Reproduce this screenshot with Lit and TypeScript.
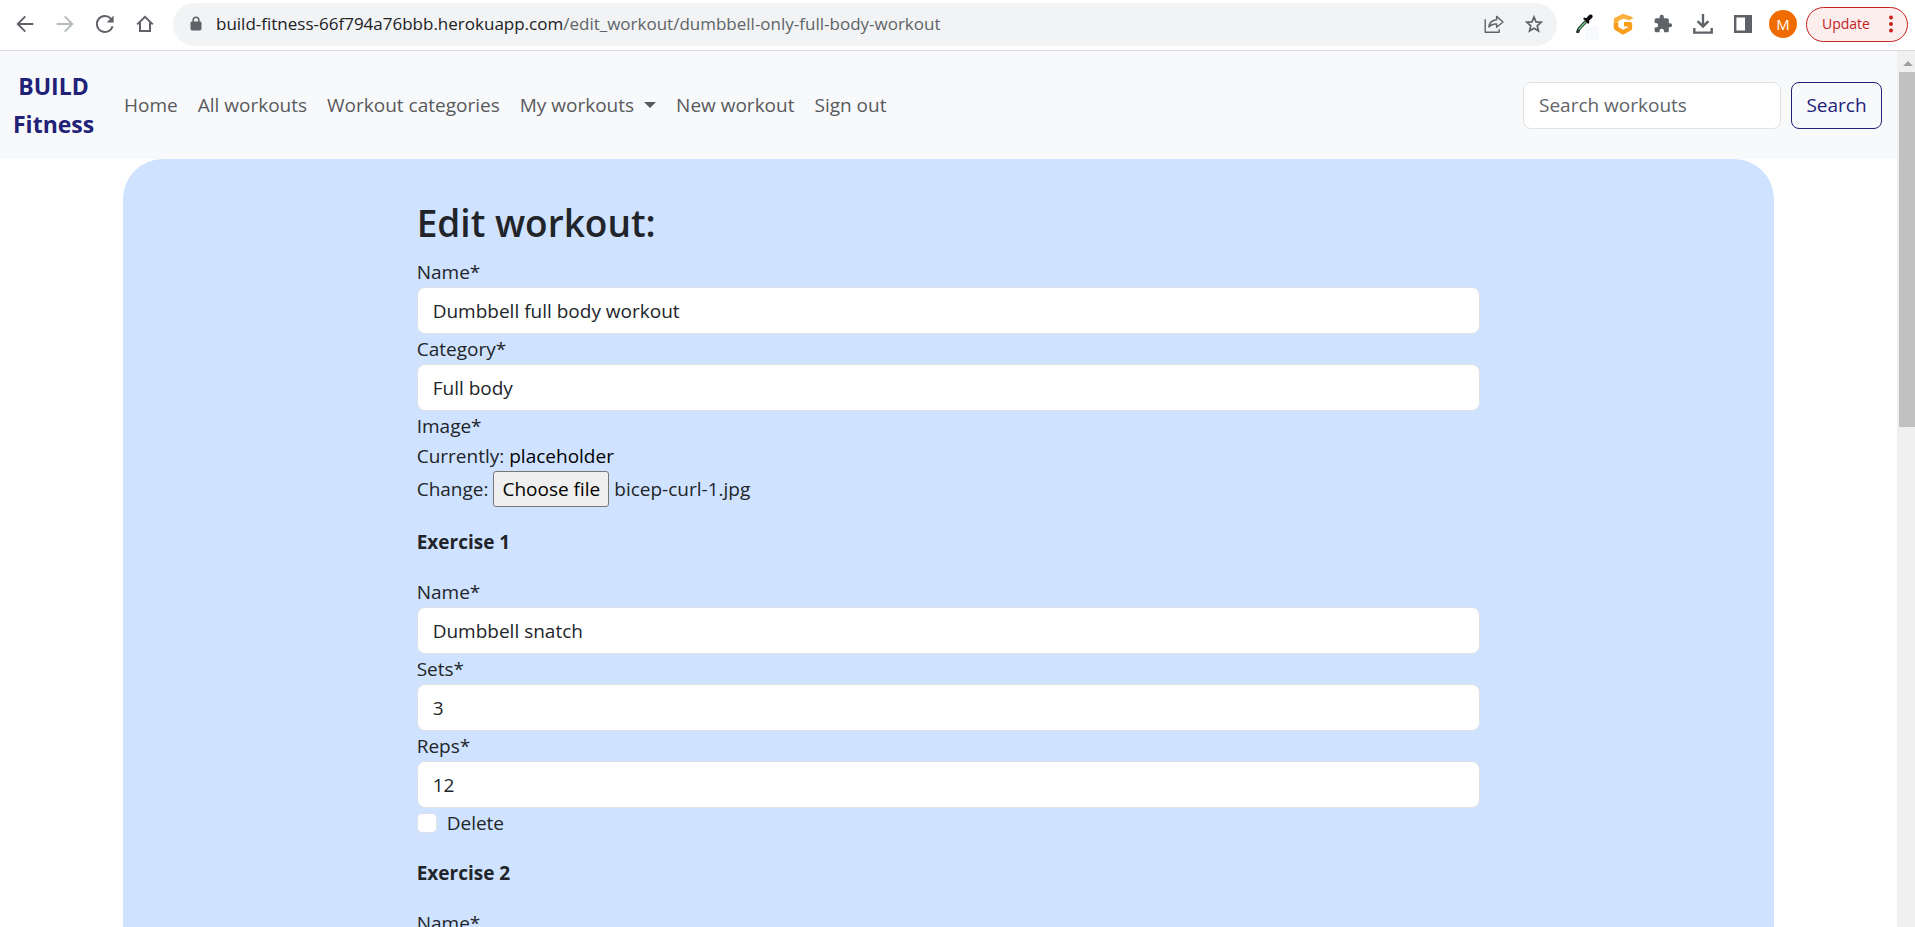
import { LitElement, html, css } from "lit";
import { customElement, property, query } from "lit/decorators.js";

const textStyles = css`
  *, *::before, *::after { box-sizing: border-box; }
  button, input, select { font: inherit; color: inherit; margin: 0; }
  svg { display: block; }
  a { color: inherit; text-decoration: none; }
`;

@customElement("browser-bar")
class BrowserBar extends LitElement {
  static styles = [textStyles, css`
    :host { display: block; flex: none; background: #fff; color: #5f6368; border-bottom: 1px solid #d9dbdf; }
    .bar { display: flex; align-items: center; height: 50px; padding: 0 7px 2px 5px; }
    .group { display: flex; }
    .icon { display: grid; place-items: center; width: 40px; height: 40px; padding: 0; border: 0; background: none; }
    .dim { color: #b9bcbf; }
    .address { display: flex; align-items: center; flex: 1; min-width: 0; height: 43px; margin: 0 6px 0 8px; padding: 0 3px 0 17px; border-radius: 22px; background: #f1f3f4; }
    .url { flex: 1; min-width: 0; margin-left: 14px; font-size: 17px; line-height: 24px; white-space: nowrap; overflow: hidden; text-overflow: ellipsis; }
    .host { color: #202124; }
    .avatar { display: grid; place-items: center; width: 28px; height: 28px; margin: 0 9px 0 6px; padding: 0; border: 0; border-radius: 50%; background: #ef6c00; color: #fff; font-size: 15px; line-height: 28px; }
    .update { display: flex; align-items: center; justify-content: space-between; width: 102px; height: 35px; padding: 0 14px 0 15px; border: 1px solid #c5221f; border-radius: 18px; background: #fbeeed; color: #c5221f; font-size: 14px; }
  `];

  render() {
    return html`
      <div class="bar">
        <div class="group">
          <button class="icon" aria-label="Back">
            <svg width="20" height="20" viewBox="0 0 20 20" fill="none" stroke="currentColor" stroke-width="1.9"><path d="M18.3 10H3M10.3 2.4 2.7 10l7.6 7.6"/></svg>
          </button>
          <button class="icon dim" aria-label="Forward">
            <svg width="20" height="20" viewBox="0 0 20 20" fill="none" stroke="currentColor" stroke-width="1.9"><path d="M1.7 10H17M9.7 2.4l7.6 7.6-7.6 7.6"/></svg>
          </button>
          <button class="icon" aria-label="Reload">
            <svg width="20" height="20" viewBox="0 0 20 20"><path d="M15.8 4.6A8 8 0 1 0 17.6 12.3" fill="none" stroke="currentColor" stroke-width="2"/><path d="M18.6 1.6v7h-7z" fill="currentColor"/></svg>
          </button>
          <button class="icon" aria-label="Home">
            <svg width="20" height="20" viewBox="0 0 20 20" fill="none" stroke="currentColor" stroke-width="2"><path d="M2.2 10.4 10 2.8l7.8 7.6M5 8.4V17h10V8.4"/></svg>
          </button>
        </div>
        <div class="address">
          <svg width="12" height="16" viewBox="0 0 12 16"><path d="M3.2 6.5V4a2.8 2.8 0 0 1 5.6 0v2.5" fill="none" stroke="currentColor" stroke-width="1.6"/><rect x=".5" y="5.5" width="11" height="9" rx="1.4" fill="currentColor"/></svg>
          <div class="url"><span class="host">build-fitness-66f794a76bbb.herokuapp.com</span>/edit_workout/dumbbell-only-full-body-workout</div>
          <button class="icon" aria-label="Share">
            <svg width="20" height="20" viewBox="0 0 20 20" fill="none" stroke="currentColor" stroke-width="1.4" stroke-linejoin="round"><path d="M1.200 5.200v13h14v-3"/><path d="M12.600 2.400 19 8l-6.400 5.200V10c-3.400-.2-5.800.7-7.800 3 .5-4.200 3.300-6.900 7.800-7.300z"/></svg>
          </button>
          <button class="icon" aria-label="Bookmark this page">
            <svg width="20" height="20" viewBox="0 0 20 20" fill="none" stroke="currentColor" stroke-width="1.7"><path d="m10 3 2 4.900 5.200.4-4 3.500 1.300 5.200L10 14.200 5.500 17l1.300-5.200-4-3.500L8 7.900z"/></svg>
          </button>
        </div>
        <div class="group">
          <button class="icon" aria-label="Colour picker">
            <svg width="34" height="32" viewBox="-10 -6 34 32"><rect x="9" y="12" width="14" height="14" rx="1" fill="#f8f9fc"/><path d="M0 18 1.500 14 8.500 6.500l2.500 2.300L4.500 15.500 3 19H.5z" fill="#26352b"/><path d="M2.500 15.500 9.500 8" stroke="#6cc58a" stroke-width="1.400"/><path d="m7 4.600 1.600-1.200 1.600.8L12.900 1.200c1.200-1.200 3.400-.8 3.700.8.2.9-.2 1.700-.9 2.300L13 6.800l.4 1.800-1.300 1.300z" fill="#0b0b0b"/></svg>
          </button>
          <button class="icon" aria-label="Extension">
            <svg width="20" height="22" viewBox="0 0 20 22" fill="none" stroke-width="4.400" stroke-linejoin="round"><path d="M17.500 6.300V5.500L10 3.200 3 6.800v8" stroke="#fbb040"/><path d="M3 10v5l7 4.300 7-4v-4h-6" stroke="#f99d1c"/></svg>
          </button>
          <button class="icon" aria-label="Extensions">
            <svg width="20" height="20" viewBox="0 0 24 24" fill="currentColor"><path d="M20.500 11H19V7c0-1.100-.9-2-2-2h-4V3.500a2.500 2.500 0 0 0-5 0V5H4c-1.100 0-2 .9-2 2v3.800h1.500a2.700 2.700 0 0 1 0 5.400H2V20c0 1.100.9 2 2 2h3.800v-1.500a2.700 2.700 0 0 1 5.400 0V22H17c1.100 0 2-.9 2-2v-4h1.500a2.500 2.500 0 0 0 0-5z"/></svg>
          </button>
          <button class="icon" aria-label="Downloads">
            <svg width="20" height="20" viewBox="0 0 20 20" fill="none" stroke="currentColor" stroke-width="2.400"><path d="M10 0v12M4.600 7.200l5.400 5.300 5.400-5.300M1.300 14v4.600h17.400V14"/></svg>
          </button>
          <button class="icon" aria-label="Side panel">
            <svg width="18" height="18" viewBox="0 0 18 18"><path d="M1.200 1.200h15.600v15.600H1.200z" fill="none" stroke="currentColor" stroke-width="2.400"/><path d="M11 1h6v16h-6z" fill="currentColor"/></svg>
          </button>
        </div>
        <button class="avatar" aria-label="Profile">M</button>
        <button class="update">Update
          <svg width="4" height="18" viewBox="0 0 4 18" fill="currentColor"><circle cx="2" cy="2.500" r="2"/><circle cx="2" cy="9" r="2"/><circle cx="2" cy="15.500" r="2"/></svg>
        </button>
      </div>`;
  }
}

@customElement("site-nav")
class SiteNav extends LitElement {
  static styles = [textStyles, css`
    :host { display: block; background: #f8f9fb; color: #595a5c; }
    .nav { display: flex; align-items: center; padding: 16px 15px 16px 13px; }
    .brand { flex: none; width: 81px; margin-right: 20px; color: #212178; font-size: 23px; font-weight: 700; line-height: 38px; text-align: center; }
    .links { display: flex; flex: 1; margin: 0; padding: 0; list-style: none; }
    .link { display: flex; align-items: center; gap: 10px; padding: 10px; line-height: 30px; white-space: nowrap; }
    .caret { border: 6px solid transparent; border-top-color: currentColor; border-bottom: 0; }
    .search { display: flex; gap: 10px; }
    .field { width: 258px; height: 47px; padding: 0 15px; border: 1px solid #dee2e6; border-radius: 8px; background: #fff; color: #212529; outline: 0; }
    .field::placeholder { color: #5f6469; opacity: 1; }
    .submit { width: 91px; height: 47px; padding: 0; border: 1px solid #212178; border-radius: 8px; background: transparent; color: #212178; }
  `];

  render() {
    return html`
      <nav class="nav">
        <a class="brand" href="#">BUILD Fitness</a>
        <ul class="links">
          <li><a class="link" href="#">Home</a></li>
          <li><a class="link" href="#">All workouts</a></li>
          <li><a class="link" href="#">Workout categories</a></li>
          <li><a class="link" href="#">My workouts <span class="caret"></span></a></li>
          <li><a class="link" href="#">New workout</a></li>
          <li><a class="link" href="#">Sign out</a></li>
        </ul>
        <form class="search" @submit=${(e: Event) => e.preventDefault()}>
          <input class="field" type="search" placeholder="Search workouts" aria-label="Search workouts">
          <button class="submit">Search</button>
        </form>
      </nav>`;
  }
}

interface Field { id: string; label: string; value?: string; type?: string }

@customElement("workout-form")
class WorkoutForm extends LitElement {
  @property() fileName = "bicep-curl-1.jpg";
  @query(".file") fileInput!: HTMLInputElement;

  static styles = [textStyles, css`
    :host { display: block; color: #212529; }
    .title { margin: 0 0 10px; font-size: 37px; font-weight: 600; line-height: 48px; }
    .row { display: flex; flex-direction: column; }
    .label { line-height: 30px; }
    .control { appearance: none; width: 100%; height: 47px; padding: 0 15px; border: 1px solid #dee2e6; border-radius: 8px; background: #fff; outline: 0; }
    .control::-webkit-inner-spin-button { appearance: none; }
    .line { display: flex; align-items: center; gap: 5px; line-height: 30px; }
    .current { color: #000; }
    .file { display: none; }
    .choose { height: 36px; padding: 0 8px; border: 1px solid #767676; border-radius: 3px; background: #efefef; color: #000; }
    .heading { margin: 20px 0; font-size: inherit; font-weight: 700; line-height: 30px; }
    .check { appearance: none; width: 20px; height: 20px; margin: 0 5px 0 0; border: 1px solid #dee2e6; border-radius: 5px; background: #fff; }
    .check:checked { background: #0d6efd; }
  `];

  field({ id, label, value = "", type = "text" }: Field) {
    return html`
      <div class="row">
        <label class="label" for=${id}>${label}*</label>
        <input class="control" id=${id} type=${type} .value=${value}>
      </div>`;
  }

  pick() {
    const file = this.fileInput.files?.[0];
    if (file) this.fileName = file.name;
  }

  render() {
    return html`
      <form>
        <h1 class="title">Edit workout:</h1>
        ${this.field({ id: "name", label: "Name", value: "Dumbbell full body workout" })}
        <div class="row">
          <label class="label" for="category">Category*</label>
          <select class="control" id="category"><option>Full body</option></select>
        </div>
        <label class="label" for="image">Image*</label>
        <div class="line">Currently: <a class="current" href="#">placeholder</a></div>
        <div class="line">Change:
          <input class="file" id="image" type="file" accept="image/*" @change=${this.pick}>
          <button class="choose" type="button" @click=${() => this.fileInput.click()}>Choose file</button>
          <output for="image">${this.fileName}</output>
        </div>
        <h2 class="heading">Exercise 1</h2>
        ${this.field({ id: "name-1", label: "Name", value: "Dumbbell snatch" })}
        ${this.field({ id: "sets-1", label: "Sets", value: "3", type: "number" })}
        ${this.field({ id: "reps-1", label: "Reps", value: "12", type: "number" })}
        <div class="line">
          <input class="check" id="delete-1" type="checkbox">
          <label for="delete-1">Delete</label>
        </div>
        <h2 class="heading">Exercise 2</h2>
        ${this.field({ id: "name-2", label: "Name" })}
      </form>`;
  }
}

@customElement("app-root")
class AppRoot extends LitElement {
  static styles = [textStyles, css`
    :host { display: flex; flex-direction: column; height: 100vh; background: #fff; font-family: "Open Sans", "Noto Sans", sans-serif; font-size: 19px; line-height: 30px; }
    .view { display: flex; flex: 1; min-height: 0; }
    .page { flex: 1; min-width: 0; overflow-y: auto; scrollbar-width: none; }
    .panel { width: 88%; max-width: 1651px; margin: 0 auto; padding: 40px 15px; border-radius: 40px 40px 0 0; background: #cfe2ff; }
    .form { display: block; width: calc(200% / 3 - 17px); margin: 0 auto; }
    .scroll { display: flex; flex-direction: column; flex: none; width: 18px; background: #f0f0f0; }
    .up { display: grid; place-items: center; height: 21px; padding: 3px 0 0 3px; }
    .thumb { height: 40.5%; margin-left: 2px; background: #c1c1c1; }
  `];

  render() {
    return html`
      <browser-bar></browser-bar>
      <div class="view">
        <div class="page">
          <site-nav></site-nav>
          <main class="panel"><workout-form class="form"></workout-form></main>
        </div>
        <div class="scroll" aria-hidden="true">
          <div class="up"><svg width="10" height="5" viewBox="0 0 10 5"><path d="M5 0l5 5H0z" fill="#a0a0a0"/></svg></div>
          <div class="thumb"></div>
        </div>
      </div>`;
  }
}
